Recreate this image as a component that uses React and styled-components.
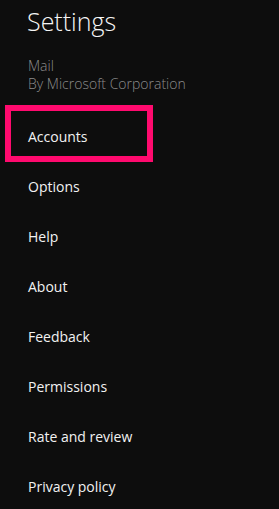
import styled, { createGlobalStyle } from "styled-components";

const items = [
  { title: "Accounts", highlighted: true },
  { title: "Options" },
  { title: "Help" },
  { title: "About" },
  { title: "Feedback" },
  { title: "Permissions" },
  { title: "Rate and review" },
  { title: "Privacy policy" },
];

const GlobalStyle = createGlobalStyle`
  html, body {
    margin: 0;
    padding: 0;
    background: #0d0d0d;
  }
  body {
    font-family: "Open Sans", "Noto Sans", sans-serif;
    color: #f2f2f2;
  }
`;

const Pane = styled.div`
  width: 279px;
  height: 509px;
  overflow: hidden;
  background: #0d0d0d;
  display: flex;
  flex-direction: column;
`;

const Header = styled.header`
  padding: 4px 0 0 27px;
`;

const Title = styled.h1`
  margin: 0;
  font-size: 25px;
  font-weight: 300;
  line-height: 34px;
  color: #f5f5f5;
`;

const AppInfo = styled.div`
  margin-top: 19px;
  padding-left: 1px;
  font-size: 14px;
  font-weight: 300;
  line-height: 18px;
  color: #8c8c8c;
`;

const Menu = styled.nav`
  display: flex;
  flex-direction: column;
  margin-top: 18px;
`;

const MenuItem = styled.a`
  display: flex;
  align-items: center;
  height: 50px;
  box-sizing: border-box;
  padding-left: 28px;
  font-size: 14px;
  font-weight: 400;
  color: #f2f2f2;
  cursor: pointer;
  position: relative;

  &.highlighted::before {
    content: "";
    position: absolute;
    left: 5px;
    top: -6px;
    width: 148px;
    height: 57px;
    box-sizing: border-box;
    border: 6px solid #ff0a6e;
  }
`;

const App = () => {
  return (
    <>
      <GlobalStyle />
      <Pane>
        <Header>
          <Title>Settings</Title>
          <AppInfo>
            Mail
            <br />
            By Microsoft Corporation
          </AppInfo>
        </Header>
        <Menu>
          {items.map((item) => (
            <MenuItem
              key={item.title}
              className={item.highlighted ? "highlighted" : ""}
            >
              {item.title}
            </MenuItem>
          ))}
        </Menu>
      </Pane>
    </>
  );
};

export default App;
